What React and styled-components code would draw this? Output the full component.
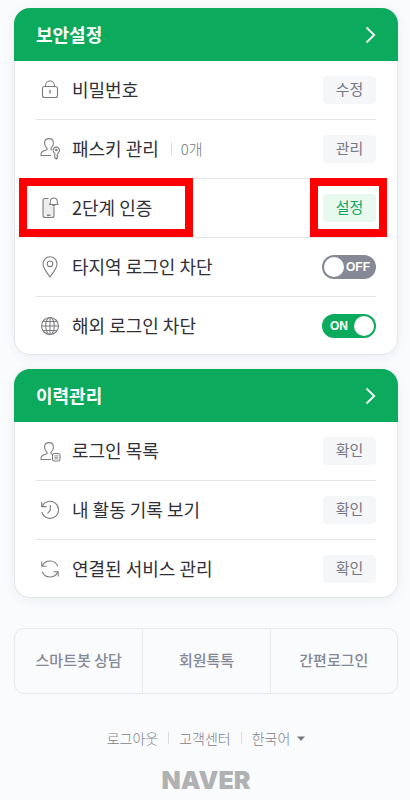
import React, { useState } from 'react';
import styled, { createGlobalStyle } from 'styled-components';

const UserShape = () => (
    <path d="M15 20.5H5C4.7 18 5.8 16.6 8 15.8L11 14.7V13.2C9.3 11.8 8.6 9.8 8.6 7.9C8.6 5.2 10.3 3.6 13 3.6S17.4 5.2 17.4 7.9C17.4 9.8 16.7 11.8 15 13.2V14.7L16 15.1" />
);

const icons = {
    lock: (
        <>
            <rect x="6.5" y="10.5" width="15" height="11" rx="2" />
            <path d="M9.5 10.5V9.5a4.5 4.5 0 0 1 9 0v1" />
            <path d="M14 14v3.5" strokeWidth="1.4" />
        </>
    ),
    passkey: (
        <>
            <UserShape />
            <path d="M18.8 18.2a3.2 3.2 0 1 1 3 0v1.4l-.9.9.9.9-.9.9.6.7-1.2 1-1.5-1.2z" />
            <circle cx="20.3" cy="15" r=".8" />
        </>
    ),
    phone: (
        <>
            <path d="M12.5 4.5H9A2 2 0 0 0 7 6.5V21.5A2 2 0 0 0 9 23.5H16A2 2 0 0 0 18 21.5V12L13.5 10.500z" fill="#ededee" stroke="none" />
            <path d="M12.5 4.5H9A2 2 0 0 0 7 6.5V21.5A2 2 0 0 0 9 23.5H16A2 2 0 0 0 18 21.5V13" />
            <path d="M11 21.2h3.5" strokeWidth="1.4" />
            <path d="M13.5 10.5C14.4 9.7 14.4 8.9 14.4 7.4a3.4 3.4 0 0 1 6.8 0c0 1.5 0 2.3.9 3.1z" fill="#fff" />
            <path d="M16.7 10.6a1.1 1.3 0 0 0 2.2 0" />
        </>
    ),
    pin: (
        <>
            <path d="M14 24C11 19.8 7 15.3 7 10.8a7 7 0 0 1 14 0C21 15.3 17 19.8 14 24z" />
            <circle cx="14" cy="10.8" r="2.8" />
        </>
    ),
    globe: (
        <>
            <circle cx="14" cy="14" r="8.5" />
            <ellipse cx="14" cy="14" rx="4.3" ry="8.5" />
            <path d="M14 5.5v17M5.5 14h17M6.8 9.5h14.4M6.8 18.5h14.4" />
        </>
    ),
    loginList: (
        <>
            <g transform="translate(0 2)"><UserShape /></g>
            <rect x="16.5" y="16.5" width="7.5" height="7.5" rx="1.8" />
            <path d="M18.3 18.8h4M18.3 20.3h4M18.3 21.8h4" strokeWidth=".8" />
        </>
    ),
    history: (
        <>
            <path d="M6.2 10.5A8.5 8.5 0 1 1 5.8 16" />
            <path d="M5.7 6v4.6h4.8" />
            <path d="M14.3 9v5.4l-2.8 3" />
        </>
    ),
    sync: (
        <>
            <path d="M6.3 11A8.400 8.400 0 0 1 21.8 11.2" />
            <path d="M5.8 6.5v4.7h4.7" />
            <path d="M21.7 17A8.4 8.4 0 0 1 6.2 16.8" />
            <path d="M22.2 21.5v-4.7h-4.7" />
        </>
    ),
};

const securityRows = [
    { icon: 'lock', label: '비밀번호', action: '수정' },
    { icon: 'passkey', label: '패스키 관리', count: '0개', action: '관리' },
    { icon: 'phone', label: '2단계 인증', action: '설정', primary: true, marked: true },
    { icon: 'pin', label: '타지역 로그인 차단', toggle: true, on: false },
    { icon: 'globe', label: '해외 로그인 차단', toggle: true, on: true },
];

const historyRows = [
    { icon: 'loginList', label: '로그인 목록', action: '확인' },
    { icon: 'history', label: '내 활동 기록 보기', action: '확인' },
    { icon: 'sync', label: '연결된 서비스 관리', action: '확인' },
];

const Toggle = ({ id, defaultOn }) => {
    const [on, setOn] = useState(defaultOn);
    return (
        <ToggleTrack $on={on}>
            <ToggleInput
                id={id}
                type="checkbox"
                role="switch"
                checked={on}
                onChange={() => setOn(!on)}
            />
            <ToggleText>{on ? 'ON' : 'OFF'}</ToggleText>
            <ToggleKnob />
        </ToggleTrack>
    );
};

const Section = ({ title, rows }) => (
    <Card>
        <CardHeader href="#">
            <CardTitle>{title}</CardTitle>
            <svg width="11" height="18" viewBox="0 0 11 18" fill="none" stroke="#fff" strokeWidth="1.8">
                <path d="M1.5 1.5L9.2 9L1.5 16.5" />
            </svg>
        </CardHeader>
        <RowList>
            {rows.map((row) => (
                <Row key={row.label}>
                    <RowIcon viewBox="0 0 28 28" aria-hidden="true">{icons[row.icon]}</RowIcon>
                    <RowLabel as={row.toggle ? 'label' : 'span'} htmlFor={row.toggle ? row.icon : undefined}>
                        {row.label}
                    </RowLabel>
                    {row.count && <RowCount>{row.count}</RowCount>}
                    <RowEnd>
                        {row.toggle
                            ? <Toggle id={row.icon} defaultOn={row.on} />
                            : <ActionButton type="button" $primary={row.primary}>{row.action}</ActionButton>}
                    </RowEnd>
                    {row.marked && <LabelMark />}
                    {row.marked && <ActionMark />}
                </Row>
            ))}
        </RowList>
    </Card>
);

const App = () => (
    <>
        <GlobalStyle />
        <Page>
            <Section title="보안설정" rows={securityRows} />
            <Section title="이력관리" rows={historyRows} />
            <QuickMenu>
                <QuickLink href="#">스마트봇 상담</QuickLink>
                <QuickLink href="#">회원톡톡</QuickLink>
                <QuickLink href="#">간편로그인</QuickLink>
            </QuickMenu>
            <Footer>
                <FooterMenu>
                    <FooterItem><a href="#">로그아웃</a></FooterItem>
                    <FooterItem><a href="#">고객센터</a></FooterItem>
                    <FooterItem>
                        <LanguageSelect aria-label="언어" defaultValue="ko">
                            <option value="ko">한국어</option>
                        </LanguageSelect>
                        <svg width="8" height="5" viewBox="0 0 8 5" fill="#777a80">
                            <path d="M0 0.5h8L4 5z" />
                        </svg>
                    </FooterItem>
                </FooterMenu>
                <Logo>NAVER</Logo>
            </Footer>
        </Page>
    </>
);

const GlobalStyle = createGlobalStyle`
    * {
        box-sizing: border-box;
    }

    body {
        margin: 0;
        background-color: #fafbfd;
        font-family: 'Noto Sans CJK KR', 'Noto Sans', sans-serif;
        color: #303038;
    }

    a {
        color: inherit;
        text-decoration: none;
    }

    button, select {
        font-family: inherit;
    }
`;

const Page = styled.main`
    display: flex;
    flex-direction: column;
    gap: 14px;
    padding: 8px 12px 8px 14px;
`;

const Card = styled.section`
    border-radius: 16px;
    background-color: #fff;
    box-shadow: inset 0 0 0 1px #e3e7ea, 0 2px 12px rgba(0, 20, 60, 0.06);
`;

const CardHeader = styled.a`
    display: flex;
    align-items: center;
    justify-content: space-between;
    height: 53px;
    padding: 0 22px;
    border-radius: 16px 16px 0 0;
    background-color: #0caa5c;
    color: #fff;
`;

const CardTitle = styled.h2`
    margin: 0;
    padding-bottom: 2px;
    font-size: 18px;
    font-weight: 700;
    line-height: 26px;
`;

const RowList = styled.ul`
    margin: 0;
    padding: 0 22px;
    list-style: none;
`;

const Row = styled.li`
    position: relative;
    display: flex;
    align-items: center;
    height: 58px;

    & + & {
        height: 59px;
        border-top: 1px solid #e3e6e9;
    }
`;

const RowIcon = styled.svg`
    flex: none;
    width: 28px;
    height: 28px;
    margin-right: 8px;
    fill: none;
    stroke: #7c7d80;
    stroke-width: 1.1;
    stroke-linejoin: round;
`;

const RowLabel = styled.span`
    padding-bottom: 2px;
    font-size: 18px;
    font-weight: 400;
    line-height: 26px;
`;

const RowCount = styled.span`
    display: flex;
    align-items: center;
    margin-left: 12px;
    font-size: 15px;
    font-weight: 300;
    line-height: 26px;
    color: #767a86;

    &::before {
        content: '';
        width: 1px;
        height: 14px;
        margin-right: 9px;
        background-color: #dcdee3;
    }
`;

const RowEnd = styled.div`
    display: flex;
    margin-left: auto;
`;

const ActionButton = styled.button`
    width: 53px;
    height: 28px;
    padding: 0 0 2px;
    border: 0;
    border-radius: 4px;
    background-color: ${({ $primary }) => ($primary ? '#e8f9f0' : '#f5f6f8')};
    color: ${({ $primary }) => ($primary ? '#12a55d' : '#757884')};
    font-size: 15px;
    font-weight: 400;
    line-height: 26px;
    cursor: pointer;
`;

const ToggleTrack = styled.span`
    position: relative;
    display: flex;
    flex-direction: ${({ $on }) => ($on ? 'row' : 'row-reverse')};
    align-items: center;
    justify-content: space-between;
    width: 54px;
    height: 24px;
    padding: ${({ $on }) => ($on ? '0 2px 0 8px' : '0 6px 0 2px')};
    border-radius: 12px;
    background-color: ${({ $on }) => ($on ? '#0caa5c' : '#858895')};
`;

const ToggleInput = styled.input`
    position: absolute;
    inset: 0;
    width: 100%;
    height: 100%;
    margin: 0;
    opacity: 0;
    cursor: pointer;
`;

const ToggleText = styled.span`
    font-family: 'Liberation Sans', sans-serif;
    font-size: 12px;
    font-weight: 700;
    line-height: 24px;
    color: #fff;
`;

const ToggleKnob = styled.span`
    width: 20px;
    height: 20px;
    border-radius: 50%;
    background-color: #fff;
`;

const Mark = styled.span`
    position: absolute;
    top: -1px;
    height: 59px;
    border: 8px solid #f00;
    pointer-events: none;
`;

const LabelMark = styled(Mark)`
    left: -17px;
    width: 174px;
`;

const ActionMark = styled(Mark)`
    right: -11px;
    width: 77px;
`;

const QuickMenu = styled.nav`
    display: grid;
    grid-template-columns: repeat(3, 1fr);
    margin-top: 16px;
    border: 1px solid #e6e8ed;
    border-radius: 10px;
`;

const QuickLink = styled.a`
    padding: 19px 0 21px;
    font-size: 15px;
    font-weight: 500;
    line-height: 24px;
    text-align: center;
    color: #858895;

    & + & {
        border-left: 1px solid #e9ebef;
    }
`;

const Footer = styled.footer`
    display: flex;
    flex-direction: column;
    align-items: center;
    gap: 16px;
    margin-top: 18px;
`;

const FooterMenu = styled.div`
    display: flex;
    font-size: 14px;
    font-weight: 300;
    line-height: 24px;
    color: #808286;
`;

const FooterItem = styled.div`
    display: flex;
    align-items: center;

    & + &::before {
        content: '';
        width: 1px;
        height: 12px;
        margin: 0 10px;
        background-color: #dadce0;
    }
`;

const LanguageSelect = styled.select`
    appearance: none;
    field-sizing: content;
    margin: 0 7px 0 0;
    padding: 0;
    border: 0;
    background: none;
    font-size: 14px;
    font-weight: 300;
    line-height: 24px;
    color: inherit;
`;

const Logo = styled.strong`
    font-family: Inter, sans-serif;
    font-size: 25px;
    font-weight: 900;
    line-height: 28px;
    color: #b0b1b3;
`;

export default App;
